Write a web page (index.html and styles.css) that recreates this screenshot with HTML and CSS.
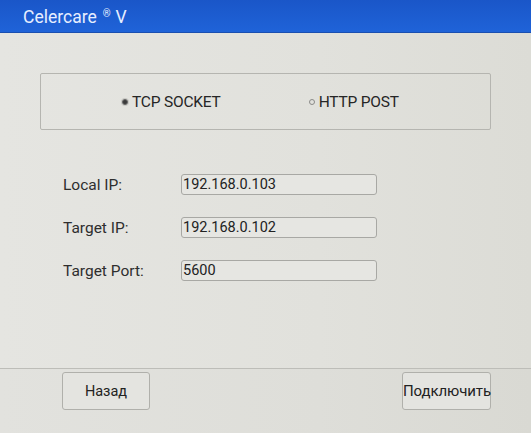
FILE: index.html
```html
<!DOCTYPE html>
<html>
<head>
<meta charset="utf-8">
<link rel="stylesheet" href="styles.css">
</head>
<body>
<div class="app">
  <header class="titlebar">Celercare<sup class="reg">®</sup>V</header>
  <main class="content">
    <div class="modes">
      <label class="mode"><span class="dot on"></span>TCP SOCKET</label>
      <label class="mode"><span class="dot"></span>HTTP POST</label>
    </div>
    <div class="form">
      <div class="row"><span class="label">Local IP:</span><div class="field">192.168.0.103</div></div>
      <div class="row"><span class="label">Target IP:</span><div class="field">192.168.0.102</div></div>
      <div class="row"><span class="label">Target Port:</span><div class="field">5600</div></div>
    </div>
  </main>
  <footer class="actions">
    <button class="btn back">Назад</button>
    <button class="btn connect">Подключить</button>
  </footer>
</div>
</body>
</html>
```
FILE: styles.css
```css
html, body {
  margin: 0;
  padding: 0;
}
body {
  width: 531px;
  height: 433px;
  overflow: hidden;
  background: #e3e3df;
  font-family: Roboto, "Liberation Sans", sans-serif;
  color: #2b2b2b;
}
.app {
  display: flex;
  flex-direction: column;
  height: 433px;
}
.titlebar {
  height: 33px;
  box-sizing: border-box;
  padding: 7px 0 0 23px;
  background: linear-gradient(#1a56c8, #1f63d8);
  border-bottom: 1px solid #1a4fb0;
  color: #e6eeff;
  font-size: 17.5px;
  line-height: 20px;
}
.reg {
  font-size: 10px;
  vertical-align: top;
  line-height: 10px;
  margin: 0 5px 0 6px;
  position: relative;
  top: 2px;
}
.content {
  flex: 1;
  display: flex;
  flex-direction: column;
  padding-top: 40px;
  background: linear-gradient(90deg, #e5e5e1, #e1e1dc 60%, #dcdcd6);
}
.modes {
  margin: 0 40px;
  height: 57px;
  box-sizing: border-box;
  border: 1px solid #b5b5b0;
  border-radius: 2px;
  display: flex;
  align-items: center;
  padding-left: 81px;
  gap: 88px;
}
.mode {
  display: flex;
  align-items: center;
  font-size: 15.5px;
  color: #262626;
  letter-spacing: -0.2px;
}
.dot {
  width: 6px;
  height: 6px;
  border-radius: 50%;
  border: 1px solid #8a8a88;
  box-sizing: border-box;
  margin-right: 4px;
}
.dot.on {
  background: #3a3a3a;
  border-color: #6a6a6a;
  box-shadow: 0 0 0 1px #c8c8c4;
}
.form {
  display: flex;
  flex-direction: column;
  gap: 22px;
  margin-top: 44px;
  padding-left: 63px;
}
.row {
  display: flex;
  align-items: center;
  height: 21px;
}
.label {
  width: 118px;
  font-size: 15.5px;
  color: #2e2e2e;
}
.field {
  width: 196px;
  height: 21px;
  box-sizing: border-box;
  border: 1px solid #a8a8a4;
  border-radius: 3px;
  padding-left: 1px;
  font-size: 14.5px;
  line-height: 19px;
  color: #222;
  background: #e6e6e2;
}
.actions {
  height: 65px;
  box-sizing: border-box;
  border-top: 1px solid #bdbdb8;
  display: flex;
  justify-content: space-between;
  align-items: flex-start;
  padding: 3px 40px 0 62px;
  background: linear-gradient(90deg, #e2e2de, #deded9 60%, #d9d9d3);
}
.btn {
  height: 38px;
  box-sizing: border-box;
  border: 1px solid #b0b0ab;
  border-radius: 3px;
  background: #e4e4e0;
  font-family: Roboto, "Liberation Sans", sans-serif;
  font-size: 14.5px;
  color: #222;
  padding: 0;
}
.back {
  width: 88px;
}
.connect {
  width: 89px;
  font-size: 15px;
  letter-spacing: -0.1px;
}
```
